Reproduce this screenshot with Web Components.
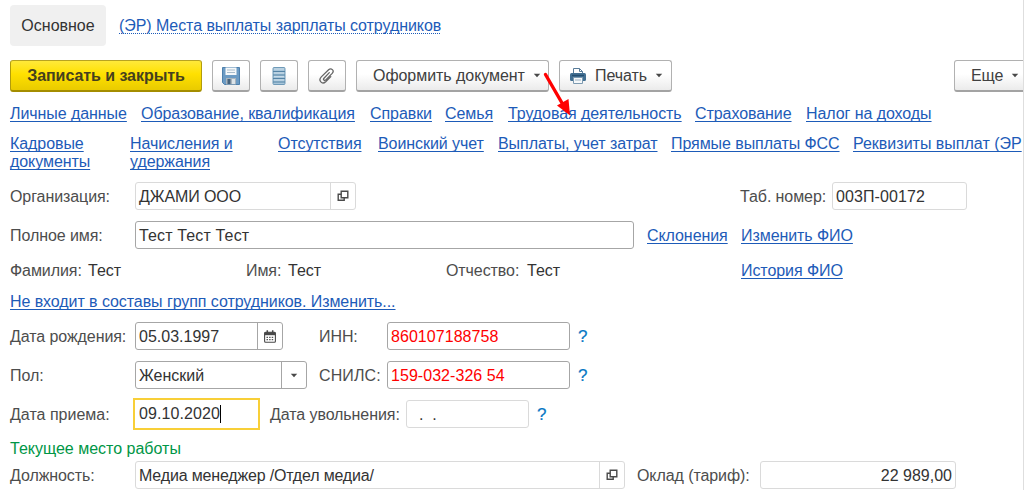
<!DOCTYPE html>
<html lang="ru">
<head>
<meta charset="utf-8">
<title>Сотрудник</title>
<style>
  body {
    margin: 0;
    overflow: hidden;
    background: #fff;
  }
</style>
</head>
<body>
<employee-card></employee-card>

<script>
const icons = {
  save: `<svg width="20" height="20" viewBox="0 0 20 20"><path d="M1.5 1.5h17v17h-15l-2-2z" fill="#6c9bc4" stroke="#4d80ad"/><path d="M4.5 1.5h11v7.5h-11z" fill="#f5f8fa"/><path d="M6 4h8M6 6.5h8" stroke="#a9bccb"/><path d="M5 12h10v6.5H5z" fill="#a9b4bd"/><path d="M6.5 13h3v5h-3z" fill="#46637d"/><path d="M11 13h3v5h-3z" fill="#dce4e9"/></svg>`,
  list: `<svg width="14" height="20" viewBox="0 0 14 20"><rect x="1" y="1.5" width="12" height="17" rx="1" fill="#a9c6da" stroke="#6f9ab8"/><path d="M1 5.5h12M1 9h12M1 12.5h12M1 16h12" stroke="#5584a6" stroke-width="1.2"/><path d="M2 3h10M2 7h10M2 10.5h10M2 14h10" stroke="#c9dce9"/></svg>`,
  clip: `<svg width="18" height="18" viewBox="0 0 18 18" fill="none" stroke="#666" stroke-width="1.3" stroke-linecap="round"><path d="M11.3 5.6 6 11.2c-1.3 1.5.5 3 1.8 1.7l6.4-6.5c2.6-2.9-1-6-3.6-3.6L3.3 9.9c-3.5 3.7.8 8.1 4.4 4.8l5.1-5.1"/></svg>`,
  print: `<svg width="18" height="18" viewBox="0 0 18 18"><path d="M4.5 6V1.5h6l3 3V6" fill="#fff" stroke="#587b98"/><path d="M10.5 1.5v3h3" fill="none" stroke="#587b98"/><rect x="1" y="6" width="16" height="8" rx="1.5" fill="#426f92"/><path d="M3 8.5h12" stroke="#244e70" stroke-width="1.4"/><path d="M4.5 10.5h9v6h-9z" fill="#f5f8fa" stroke="#7e9bb1"/><path d="M6 13h6" stroke="#9db3c4"/></svg>`,
  open: `<svg width="12" height="12" viewBox="0 0 12 12" fill="none" stroke="#4a4a4a" stroke-width="1.4"><path d="M4.2 1.2h6.6v6.6H4.2z"/><path d="M4.2 4.2h-3v6h6V7.8"/></svg>`,
  calendar: `<svg width="12" height="13" viewBox="0 0 12 13"><path d="M1.6 2.2h8.8q1 0 1 1v8q0 1-1 1H1.6q-1 0-1-1v-8q0-1 1-1z" fill="#fff" stroke="#484848" stroke-width="1.1"/><path d="M.6 2.2h10.8v3H.6z" fill="#484848"/><path d="M3.3.3v3M8.7.3v3" stroke="#484848" stroke-width="1.5"/><path d="M2.5 7.3h7M2.5 9.6h7" stroke="#555" stroke-width="1.3" stroke-dasharray="1.5 1.1"/></svg>`,
  down: `<svg width="8" height="5" viewBox="0 0 8 5"><path d="M.8.7h6.4L4 4.3z" fill="#484848"/></svg>`,
};

class NavLink extends HTMLElement {
  constructor() {
    super();
    this.attachShadow({ mode: 'open' });
  }

  connectedCallback() {
    this.shadowRoot.innerHTML = `
      <style>
        :host {
          display: block;
          flex-shrink: 0;
          letter-spacing: -0.07px;
          white-space: nowrap;
        }
        a {
          color: #1d5bb8;
          text-decoration: underline;
          text-decoration-thickness: 1px;
          text-underline-offset: 2px;
          text-decoration-skip-ink: none;
          cursor: pointer;
        }
        :host([dotted]) a {
          text-decoration-style: dotted;
        }
      </style>
      <a><slot></slot></a>
    `;
  }
}

class ToolButton extends HTMLElement {
  constructor() {
    super();
    this.attachShadow({ mode: 'open' });
  }

  connectedCallback() {
    const icon = this.getAttribute('icon');
    this.shadowRoot.innerHTML = `
      <style>
        :host {
          display: block;
          flex-shrink: 0;
          height: 32px;
          letter-spacing: -0.05px;
        }
        button {
          display: flex;
          align-items: center;
          justify-content: center;
          gap: 8px;
          box-sizing: border-box;
          width: 100%;
          height: 32px;
          padding: 0;
          border: 1px solid #b1b1b1;
          border-bottom: 2px solid #a3a3a3;
          border-radius: 3px;
          background: linear-gradient(#fff 45%, #ebebeb);
          color: #404040;
          font: inherit;
          letter-spacing: inherit;
          white-space: nowrap;
        }
        :host([primary]) button {
          border-color: #b8a321 #b29c0c #a48d00;
          background: linear-gradient(#ffe93a, #ffe000 45%, #e9cb00);
          color: #45401e;
          font-weight: bold;
        }
        :host([menu]) button {
          justify-content: flex-start;
          padding-left: var(--pad, 16px);
        }
      </style>
      <button>${icon ? icons[icon] : ''}<slot></slot>${this.hasAttribute('menu') ? icons.down : ''}</button>
    `;
  }
}

class InputField extends HTMLElement {
  constructor() {
    super();
    this.attachShadow({ mode: 'open' });
  }

  connectedCallback() {
    const icon = this.getAttribute('icon');
    this.shadowRoot.innerHTML = `
      <style>
        :host {
          display: flex;
          box-sizing: border-box;
          height: 28px;
          border: 1px solid #a6a6a6;
          border-radius: 3px;
          background: #fff;
          color: #333;
        }
        :host([muted]) {
          border-color: #dadada;
        }
        :host([invalid]) {
          color: #f00;
        }
        :host([focused]) {
          height: 32px;
          border: 2px solid #f8cf38;
          border-radius: 0;
        }
        .value {
          flex: 1;
          padding: 0 3px;
          line-height: 27px;
          white-space: pre;
        }
        :host([number]) .value {
          text-align: right;
        }
        :host([focused]) .value {
          padding-left: 4px;
          line-height: 28px;
        }
        .caret {
          display: inline-block;
          width: 1px;
          height: 18px;
          background: #000;
          vertical-align: -4px;
        }
        .action {
          display: flex;
          align-items: center;
          justify-content: center;
          width: 24px;
          border-left: 1px solid #a6a6a6;
        }
        :host([muted]) .action {
          border-color: #dadada;
        }
      </style>
      <div class="value"><slot></slot>${this.hasAttribute('focused') ? '<span class="caret"></span>' : ''}</div>
      ${icon ? `<div class="action">${icons[icon]}</div>` : ''}
    `;
  }
}

// A line of labels and fields, column widths come from the cols attribute
class FormRow extends HTMLElement {
  constructor() {
    super();
    this.attachShadow({ mode: 'open' });
  }

  connectedCallback() {
    this.shadowRoot.innerHTML = `
      <style>
        :host {
          display: grid;
          grid-template-columns: ${this.getAttribute('cols')};
          align-items: center;
          height: 28px;
          margin-bottom: 11px;
          white-space: nowrap;
        }
        ::slotted(span), ::slotted(nav-link), ::slotted(help-mark) {
          padding-top: var(--drop, 2px);
        }
        ::slotted(span) {
          letter-spacing: -0.08px;
        }
        ::slotted(help-mark) {
          padding-left: 8px;
        }
      </style>
      <slot></slot>
    `;
  }
}

class HelpMark extends HTMLElement {
  constructor() {
    super();
    this.attachShadow({ mode: 'open' });
  }

  connectedCallback() {
    this.shadowRoot.innerHTML = `
      <style>
        :host {
          display: block;
          color: #0878c4;
          font-size: 17px;
          -webkit-text-stroke: 0.2px;
        }
      </style>?
    `;
  }
}

class PointerArrow extends HTMLElement {
  constructor() {
    super();
    this.attachShadow({ mode: 'open' });
  }

  connectedCallback() {
    this.shadowRoot.innerHTML = `
      <style>
        :host {
          position: absolute;
          left: 540px;
          top: 70px;
          pointer-events: none;
        }
        svg {
          display: block;
        }
      </style>
      <svg width="34" height="48" viewBox="0 0 34 48"><path d="M5.5 4.5 22 33" stroke="#f00" stroke-width="3.4" stroke-linecap="round"/><path d="M30 45.5 17 35.5l11.5-6.5z" fill="#f00"/></svg>
    `;
  }
}

class EmployeeCard extends HTMLElement {
  constructor() {
    super();
    this.attachShadow({ mode: 'open' });
  }

  connectedCallback() {
    this.shadowRoot.innerHTML = `
      <style>
        :host {
          display: block;
          position: relative;
          box-sizing: border-box;
          width: 1024px;
          height: 490px;
          padding: 5px 0 0 10px;
          border-right: 1px solid #dedede;
          overflow: hidden;
          color: #4d4d4d;
          font: 16px/18px "Liberation Sans", Arial, sans-serif;
        }
        .tabs, .toolbar, .links {
          display: flex;
        }
        .tabs {
          align-items: center;
          gap: 13px;
          height: 41px;
          margin-bottom: 14px;
        }
        .tab {
          width: 96px;
          border-radius: 4px;
          background: #f0f0f0;
          color: #333;
          line-height: 41px;
          text-align: center;
        }
        .toolbar {
          height: 32px;
          margin-bottom: 13px;
        }
        .links {
          height: 18px;
          margin-bottom: 12px;
        }
        .links.second {
          height: 36px;
          margin-bottom: 11px;
        }
        b {
          color: #333;
          font-weight: normal;
        }
        .section {
          height: 18px;
          margin-bottom: 4px;
          color: #009646;
          line-height: 20px;
        }
      </style>
      <div class="tabs">
        <div class="tab">Основное</div>
        <nav-link dotted>(ЭР) Места выплаты зарплаты сотрудников</nav-link>
      </div>
      <div class="toolbar">
        <tool-button primary style="width:192px">Записать и закрыть</tool-button>
        <tool-button icon="save" style="width:38px;margin-left:10px"></tool-button>
        <tool-button icon="list" style="width:38px;margin-left:10px"></tool-button>
        <tool-button icon="clip" style="width:38px;margin-left:10px"></tool-button>
        <tool-button menu style="width:193px;margin-left:10px">Оформить документ</tool-button>
        <tool-button menu icon="print" style="width:113px;margin-left:10px;--pad:9px">Печать</tool-button>
        <tool-button menu style="width:90px;margin-left:282px">Еще</tool-button>
      </div>
      <div class="links">
        <nav-link style="width:131px">Личные данные</nav-link>
        <nav-link style="width:229px">Образование, квалификация</nav-link>
        <nav-link style="width:75px">Справки</nav-link>
        <nav-link style="width:63px">Семья</nav-link>
        <nav-link style="width:187px">Трудовая деятельность</nav-link>
        <nav-link style="width:111px">Страхование</nav-link>
        <nav-link>Налог на доходы</nav-link>
      </div>
      <div class="links second">
        <nav-link style="width:120px">Кадровые<br>документы</nav-link>
        <nav-link style="width:148px">Начисления и<br>удержания</nav-link>
        <nav-link style="width:100px">Отсутствия</nav-link>
        <nav-link style="width:120px">Воинский учет</nav-link>
        <nav-link style="width:173px">Выплаты, учет затрат</nav-link>
        <nav-link style="width:182px">Прямые выплаты ФСС</nav-link>
        <nav-link style="letter-spacing:0">Реквизиты выплат (ЭР</nav-link>
      </div>
      <form-row cols="125px 221px 384px 92px 135px">
        <span>Организация:</span>
        <input-field muted icon="open" style="letter-spacing:-0.1px">ДЖАМИ ООО</input-field>
        <span></span>
        <span>Таб. номер:</span>
        <input-field muted style="letter-spacing:0.1px">003П-00172</input-field>
      </form-row>
      <form-row cols="125px 499px 13px 94px auto" style="margin-bottom:8px">
        <span>Полное имя:</span>
        <input-field style="letter-spacing:0.15px">Тест Тест Тест</input-field>
        <span></span>
        <nav-link>Склонения</nav-link>
        <nav-link>Изменить ФИО</nav-link>
      </form-row>
      <form-row cols="78px 158px 42px 158px 81px 214px auto" style="margin-bottom:3px;--drop:0">
        <span>Фамилия:</span>
        <b>Тест</b>
        <span>Имя:</span>
        <b>Тест</b>
        <span>Отчество:</span>
        <b>Тест</b>
        <nav-link>История ФИО</nav-link>
      </form-row>
      <form-row cols="auto" style="margin-bottom:6px;--drop:0">
        <nav-link>Не входит в составы групп сотрудников. Изменить...</nav-link>
      </form-row>
      <form-row cols="125px 148px 36px 68px 183px auto">
        <span>Дата рождения:</span>
        <input-field icon="calendar">05.03.1997</input-field>
        <span></span>
        <span>ИНН:</span>
        <input-field invalid style="letter-spacing:0.05px">860107188758</input-field>
        <help-mark></help-mark>
      </form-row>
      <form-row cols="125px 172px 12px 68px 183px auto">
        <span>Пол:</span>
        <input-field icon="down">Женский</input-field>
        <span></span>
        <span style="letter-spacing:0.1px">СНИЛС:</span>
        <input-field invalid style="letter-spacing:0.05px">159-032-326 54</input-field>
        <help-mark></help-mark>
      </form-row>
      <form-row cols="123px 127px 10px 136px 123px auto">
        <span style="letter-spacing:0">Дата приема:</span>
        <input-field focused style="margin:-2px 0;letter-spacing:0.1px">09.10.2020</input-field>
        <span></span>
        <span>Дата увольнения:</span>
        <input-field muted>  .  .</input-field>
        <help-mark></help-mark>
      </form-row>
      <div class="section">Текущее место работы</div>
      <form-row cols="125px 490px 12px 123px 196px">
        <span>Должность:</span>
        <input-field muted icon="open" style="letter-spacing:-0.17px">Медиа менеджер /Отдел медиа/</input-field>
        <span></span>
        <span>Оклад (тариф):</span>
        <input-field muted number>22 989,00</input-field>
      </form-row>
      <pointer-arrow></pointer-arrow>
    `;
  }
}

customElements.define('nav-link', NavLink);
customElements.define('tool-button', ToolButton);
customElements.define('input-field', InputField);
customElements.define('form-row', FormRow);
customElements.define('help-mark', HelpMark);
customElements.define('pointer-arrow', PointerArrow);
customElements.define('employee-card', EmployeeCard);
</script>
</body>
</html>
